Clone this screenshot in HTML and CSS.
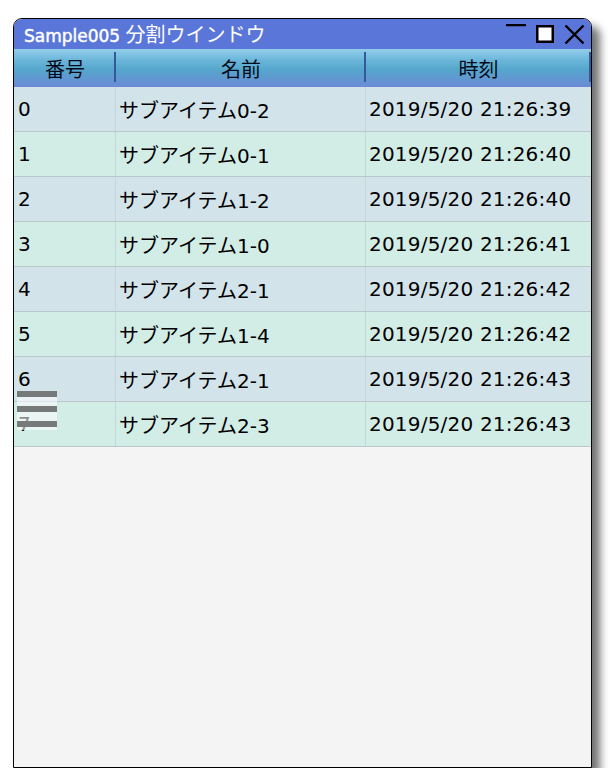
FILE: index.html
```html
<!DOCTYPE html>
<html lang="ja">
<head>
<meta charset="utf-8">
<title>Sample005 分割ウインドウ</title>
<link rel="stylesheet" href="styles.css">
</head>
<body>
<div class="window">
  <div class="titlebar">
    <div class="title"><span class="title-latin">Sample005 </span><span class="title-jp">分割ウインドウ</span></div>
    <svg class="controls" width="86" height="30" viewBox="0 0 86 30">
      <line x1="1" y1="6.2" x2="21" y2="6.2" stroke="#000" stroke-width="2.3"/>
      <rect x="32.25" y="7.25" width="15.5" height="15.5" fill="#fff" stroke="#000" stroke-width="2.5"/>
      <path d="M60.5 6.5 L78.5 24.5 M78.5 6.5 L60.5 24.5" stroke="#000" stroke-width="2.4" fill="none"/>
    </svg>
  </div>
  <div class="grid">
    <div class="row header">
      <div class="cell c1">番号</div>
      <div class="cell c2">名前</div>
      <div class="cell c3">時刻</div>
    </div>
    <div class="row even"><div class="cell c1">0</div><div class="cell c2">サブアイテム0-2</div><div class="cell c3">2019/5/20 21:26:39</div></div>
    <div class="row odd"><div class="cell c1">1</div><div class="cell c2">サブアイテム0-1</div><div class="cell c3">2019/5/20 21:26:40</div></div>
    <div class="row even"><div class="cell c1">2</div><div class="cell c2">サブアイテム1-2</div><div class="cell c3">2019/5/20 21:26:40</div></div>
    <div class="row odd"><div class="cell c1">3</div><div class="cell c2">サブアイテム1-0</div><div class="cell c3">2019/5/20 21:26:41</div></div>
    <div class="row even"><div class="cell c1">4</div><div class="cell c2">サブアイテム2-1</div><div class="cell c3">2019/5/20 21:26:42</div></div>
    <div class="row odd"><div class="cell c1">5</div><div class="cell c2">サブアイテム1-4</div><div class="cell c3">2019/5/20 21:26:42</div></div>
    <div class="row even"><div class="cell c1">6</div><div class="cell c2">サブアイテム2-1</div><div class="cell c3">2019/5/20 21:26:43</div></div>
    <div class="row odd"><div class="cell c1">7</div><div class="cell c2">サブアイテム2-3</div><div class="cell c3">2019/5/20 21:26:43</div></div>
  </div>
  <div class="menu-btn" aria-label="menu">
    <span class="bar"></span><span class="bar"></span><span class="bar"></span>
  </div>
</div>
</body>
</html>
```

FILE: styles.css
```css
html, body {
  margin: 0;
  padding: 0;
  background: #ffffff;
}

body {
  font-family: "DejaVu Sans", "Noto Sans CJK JP", sans-serif;
}

.window {
  position: relative;
  box-sizing: border-box;
  margin: 18px 0 0 13px;
  width: 579px;
  height: 750px;
  border: 1px solid #000;
  border-radius: 9px 9px 0 0;
  background: #f4f4f4;
  box-shadow: 8px 8px 9px rgba(0, 0, 0, 0.55);
  overflow: hidden;
}

.titlebar {
  height: 30px;
  background: #5a76d9;
  display: flex;
  align-items: flex-start;
  justify-content: space-between;
}

.title {
  color: #fff;
  padding-left: 10px;
  line-height: 30px;
  white-space: nowrap;
}

.title-latin {
  font-size: 17px;
  -webkit-text-stroke: 0.45px #fff;
}

.title-jp {
  font-size: 20px;
  font-family: "Noto Sans CJK JP", sans-serif;
}

.controls {
  display: block;
  flex: none;
}

.grid {
  display: flex;
  flex-direction: column;
}

.row {
  display: grid;
  grid-template-columns: 102px 250px 1fr;
  height: 45px;
  box-sizing: border-box;
  border-bottom: 1px solid #bac8cb;
  font-size: 20px;
  color: #000;
}

.row.even {
  background: #d2e3ea;
}

.row.odd {
  background: #d2ece6;
}

.cell {
  display: flex;
  align-items: center;
  padding-left: 4px;
  border-right: 1px solid #c5d6da;
  white-space: nowrap;
  overflow: hidden;
}

.row .c3 {
  border-right: none;
  letter-spacing: 0.2px;
}

.row .c2,
.row .c3 {
  padding-left: 3px;
}

.row.header {
  height: 38px;
  border-bottom: none;
  background: linear-gradient(to bottom, #94cdec 0%, #6ab6d9 30%, #55a6cc 55%, #6c8ad6 100%);
}

.row.header .cell {
  position: relative;
  justify-content: center;
  padding-left: 0;
  border-right: none;
  letter-spacing: 0;
  color: #050a1a;
}

.row.header .cell::after {
  content: "";
  position: absolute;
  right: 0;
  top: 3px;
  bottom: 5px;
  width: 2px;
  background: #34599a;
}

.menu-btn {
  position: absolute;
  left: 3px;
  top: 372px;
  width: 40px;
  height: 39px;
  background: rgba(255, 255, 255, 0.55);
  display: flex;
  flex-direction: column;
  gap: 9.5px;
}

.bar {
  display: block;
  height: 5.5px;
  background: #777a7a;
}
```
